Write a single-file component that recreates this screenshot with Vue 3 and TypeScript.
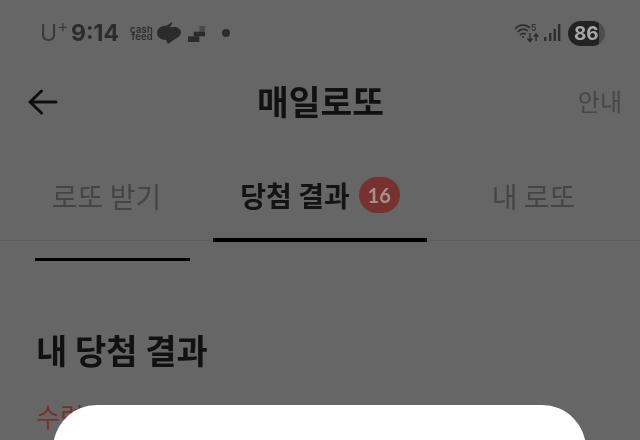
<script setup lang="ts">
const tabs = [
  { label: '로또 받기', active: false, badge: 0 },
  { label: '당첨 결과', active: true, badge: 16 },
  { label: '내 로또', active: false, badge: 0 },
]
</script>

<template>
  <div class="screen">
    <div class="status">
      <div class="status-left">
        <span class="carrier">U<sup>+</sup></span>
        <span class="time">9:14</span>
        <span class="cash">cash<br />feed</span>
        <svg class="leaf" width="24" height="22" viewBox="0 0 24 22">
          <path d="M15 0 L10 3.5 C3 4 0 7 0 11 C0 15 4 18 9 18 L11 22 L18 17 C22 15 24 13 24 10.5 C24 6 19 4 13 5.5 C14 3 16 1 15 0 Z" fill="#2b2b2b" />
        </svg>
        <svg class="steps" width="17" height="16" viewBox="0 0 18 17">
          <rect x="12" y="0" width="6" height="6" fill="#4a4a4a" />
          <rect x="6" y="6" width="12" height="5" fill="#2b2b2b" />
          <rect x="0" y="11" width="12" height="6" fill="#2b2b2b" />
        </svg>
        <span class="dot"></span>
      </div>
      <div class="status-right">
        <svg class="wifi" width="25" height="20" viewBox="0 0 25 20" fill="none" stroke="#2e2e2e">
          <path d="M1 6 C5 1 12 1 16 5" stroke-width="1.6" />
          <path d="M3.5 9 C7 5.5 11 5.5 14 8" stroke-width="1.6" />
          <path d="M6 12 C8 10 10 10 12 11" stroke-width="1.6" />
          <circle cx="9" cy="14" r="1" fill="#2e2e2e" stroke="none" />
          <path d="M16 10 V18 M13.5 15.5 L16 18.5 L18.5 15.5 M22 18 V11 M19.8 13.5 L22 11 L24.2 13.5" stroke-width="1.5" />
          <text x="17" y="7.5" class="wifi-five">5</text>
        </svg>
        <svg class="signal" width="17" height="18" viewBox="0 0 17 18" fill="#2e2e2e">
          <rect x="0" y="13" width="2.4" height="4" />
          <rect x="5" y="9" width="2.4" height="8" />
          <rect x="9.5" y="5" width="2.4" height="12" />
          <rect x="14" y="0" width="2.4" height="17" />
        </svg>
        <div class="battery"><span>86</span></div>
      </div>
    </div>

    <header class="topbar">
      <div class="side">
        <svg width="30" height="26" viewBox="0 0 30 26" fill="none" stroke="#0e0e0e" stroke-width="3" stroke-linecap="round" stroke-linejoin="round">
          <path d="M28 13 H3 M13.5 2 L2 13 L13.5 24" />
        </svg>
      </div>
      <h1 class="title">매일로또</h1>
      <div class="side right"><span class="guide">안내</span></div>
    </header>

    <nav class="tabs">
      <div v-for="t in tabs" :key="t.label" class="tab" :class="{ active: t.active }">
        <span>{{ t.label }}</span>
        <span v-if="t.badge" class="badge">{{ t.badge }}</span>
      </div>
    </nav>

    <div class="subbar"></div>

    <h2 class="heading">내 당첨 결과</h2>
    <p class="claim">수령</p>

    <div class="modal"></div>
  </div>
</template>

<style>
html, body {
  margin: 0;
  background: #666666;
}
</style>

<style scoped>
.screen {
  position: relative;
  width: 640px;
  height: 440px;
  overflow: hidden;
  background: #666666;
  font-family: "Noto Sans CJK KR", "Noto Sans", sans-serif;
  filter: blur(0.4px);
}

.status {
  height: 66px;
  box-sizing: border-box;
  display: flex;
  align-items: center;
  justify-content: space-between;
  padding: 0 35px 0 40px;
}

.status-left,
.status-right {
  display: flex;
  align-items: center;
}

.carrier {
  font-family: "Inter", sans-serif;
  font-size: 23px;
  color: #3a3a3a;
  line-height: 1;
  width: 31px;
}

.carrier sup {
  font-size: 17px;
  line-height: 0;
  vertical-align: 9px;
}

.time {
  font-family: "Inter", sans-serif;
  font-weight: 700;
  font-size: 23px;
  color: #2c2c2c;
  width: 58px;
}

.cash {
  font-family: "Inter", sans-serif;
  font-weight: 600;
  font-size: 9.5px;
  line-height: 7.5px;
  letter-spacing: 0.2px;
  color: #2c2c2c;
  width: 24px;
  text-align: right;
}

.leaf {
  margin-left: 4px;
}

.steps {
  margin-left: 7px;
  margin-top: 2px;
}

.dot {
  width: 8px;
  height: 8px;
  border-radius: 50%;
  background: #2c2c2c;
  margin-left: 17px;
}

.wifi-five {
  font-family: "Inter", sans-serif;
  font-size: 8.5px;
  font-weight: 600;
  fill: #2e2e2e;
  stroke: none;
}

.signal {
  margin-left: 5px;
}

.battery {
  width: 37px;
  height: 25px;
  margin-left: 7px;
  border-radius: 13px;
  background: linear-gradient(90deg, #232323 0 31px, #4c4c4c 31px);
  display: flex;
  align-items: center;
  padding-left: 6px;
  box-sizing: border-box;
}

.battery span {
  font-family: "Inter", sans-serif;
  font-weight: 700;
  font-size: 19px;
  color: #a8a8a8;
  line-height: 1;
}

.topbar {
  height: 72px;
  display: flex;
  align-items: center;
  padding: 0 18px 0 28px;
}

.side {
  flex: 1;
  display: flex;
  align-items: center;
}

.side.right {
  justify-content: flex-end;
  margin-bottom: 4px;
}

.title {
  margin: 0 9px 4px 0;
  font-size: 34.5px;
  font-weight: 700;
  color: #111111;
  line-height: 1;
}

.guide {
  font-size: 24px;
  color: #474747;
}

.tabs {
  margin-top: 18px;
  height: 85px;
  display: grid;
  grid-template-columns: 213px 214px 213px;
  border-bottom: 1px solid #5c5c5c;
  box-sizing: border-box;
}

.tab {
  display: flex;
  align-items: center;
  justify-content: center;
  gap: 9px;
  font-size: 28px;
  color: #454545;
  padding-bottom: 4px;
  box-sizing: border-box;
}

.tab.active {
  color: #141414;
  font-weight: 700;
  border-bottom: 4px solid #000000;
  margin-bottom: -2px;
}

.badge {
  width: 41px;
  height: 36px;
  border-radius: 18px;
  background: #763230;
  color: #a88e8c;
  font-family: "Lato", sans-serif;
  font-size: 20px;
  font-weight: 700;
  display: flex;
  align-items: center;
  justify-content: center;
}

.subbar {
  width: 155px;
  height: 3px;
  margin: 17px 0 0 35px;
  background: #000000;
}

.heading {
  margin: 64px 0 0 36px;
  font-size: 34px;
  font-weight: 700;
  line-height: 50px;
  color: #111111;
}

.claim {
  margin: 24px 0 0 36px;
  font-size: 26px;
  line-height: 34px;
  color: #7a2f2d;
}

.modal {
  position: absolute;
  left: 53px;
  top: 405px;
  width: 533px;
  height: 120px;
  border-radius: 44px;
  background: #ffffff;
}
</style>
